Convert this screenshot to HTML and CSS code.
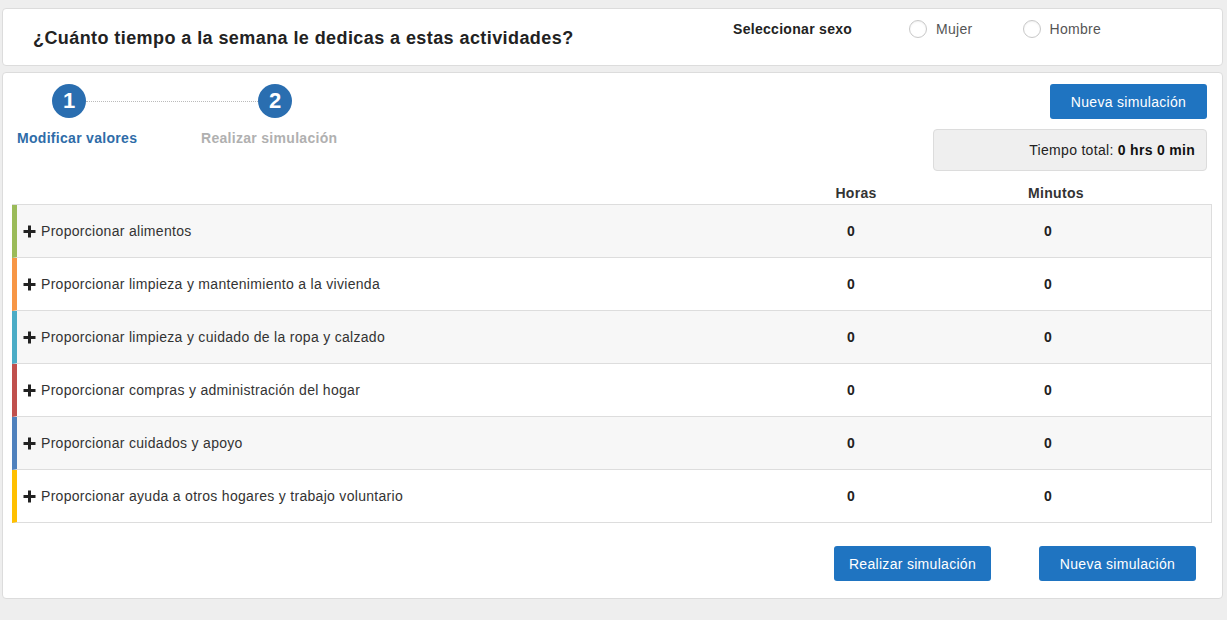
FILE: index.html
```html
<!DOCTYPE html>
<html lang="es">
<head>
<meta charset="utf-8">
<title>Simulador</title>
<link rel="stylesheet" href="styles.css">
</head>
<body>
<div class="page">
  <div class="card head-card">
    <h1 class="title">¿Cuánto tiempo a la semana le dedicas a estas actividades?</h1>
    <div class="sex">
      <span class="sex-label">Seleccionar sexo</span>
      <label class="radio"><span class="radio-circle"></span><span>Mujer</span></label>
      <label class="radio radio-2"><span class="radio-circle"></span><span>Hombre</span></label>
    </div>
  </div>

  <div class="card main-card">
    <div class="top">
      <div class="stepper">
        <div class="steps-row">
          <span class="step-circle">1</span>
          <span class="step-line"></span>
          <span class="step-circle">2</span>
        </div>
        <div class="labels-row">
          <span class="step-label active">Modificar valores</span>
          <span class="step-label">Realizar simulación</span>
        </div>
      </div>
      <div class="right-col">
        <button class="btn">Nueva simulación</button>
        <div class="total">Tiempo total: <b>0 hrs 0 min</b></div>
      </div>
    </div>

    <div class="col-head">
      <span></span>
      <span>Horas</span>
      <span>Minutos</span>
    </div>

    <div class="table">
      <div class="row odd c1">
        <span class="label"><svg class="plus" viewBox="0 0 13 13"><path d="M6.5 0.5v12M0.5 6.5h12"/></svg>Proporcionar alimentos</span>
        <span class="val">0</span><span class="val">0</span>
      </div>
      <div class="row c2">
        <span class="label"><svg class="plus" viewBox="0 0 13 13"><path d="M6.5 0.5v12M0.5 6.5h12"/></svg>Proporcionar limpieza y mantenimiento a la vivienda</span>
        <span class="val">0</span><span class="val">0</span>
      </div>
      <div class="row odd c3">
        <span class="label"><svg class="plus" viewBox="0 0 13 13"><path d="M6.5 0.5v12M0.5 6.5h12"/></svg>Proporcionar limpieza y cuidado de la ropa y calzado</span>
        <span class="val">0</span><span class="val">0</span>
      </div>
      <div class="row c4">
        <span class="label"><svg class="plus" viewBox="0 0 13 13"><path d="M6.5 0.5v12M0.5 6.5h12"/></svg>Proporcionar compras y administración del hogar</span>
        <span class="val">0</span><span class="val">0</span>
      </div>
      <div class="row odd c5">
        <span class="label"><svg class="plus" viewBox="0 0 13 13"><path d="M6.5 0.5v12M0.5 6.5h12"/></svg>Proporcionar cuidados y apoyo</span>
        <span class="val">0</span><span class="val">0</span>
      </div>
      <div class="row c6">
        <span class="label"><svg class="plus" viewBox="0 0 13 13"><path d="M6.5 0.5v12M0.5 6.5h12"/></svg>Proporcionar ayuda a otros hogares y trabajo voluntario</span>
        <span class="val">0</span><span class="val">0</span>
      </div>
    </div>

    <div class="actions">
      <button class="btn">Realizar simulación</button>
      <button class="btn">Nueva simulación</button>
    </div>
  </div>
</div>
</body>
</html>
```
FILE: styles.css
```css
* { box-sizing: border-box; }
html, body { margin: 0; padding: 0; }
body {
  background: #eeeeee;
  font-family: "Liberation Sans", Arial, sans-serif;
  color: #333;
  font-size: 14px;
  letter-spacing: 0.3px;
  width: 1227px;
  height: 620px;
  overflow: hidden;
}
.page { padding: 8px 4px 0 2px; }
.card {
  background: #fff;
  border: 1px solid #dcdcdc;
  border-radius: 4px;
}
.head-card {
  height: 58px;
  display: flex;
  align-items: flex-start;
}
.title {
  margin: 0;
  flex: 0 0 730px;
  padding: 19px 0 0 30px;
  font-size: 18px;
  letter-spacing: 0.42px;
  line-height: 20px;
  font-weight: bold;
  color: #222;
}
.sex {
  display: flex;
  align-items: center;
  padding-top: 10px;
  line-height: 20px;
}
.sex-label { font-weight: bold; color: #222; width: 176px; }
.radio { display: flex; align-items: center; color: #555; }
.radio-circle {
  width: 18px; height: 18px;
  border: 1px solid #c8c8c8;
  border-radius: 50%;
  background: #fff;
  margin-right: 9px;
  box-shadow: inset 0 1px 2px rgba(0,0,0,0.06);
}
.radio-2 { margin-left: 50px; }

.main-card {
  margin-top: 6px;
  height: 527px;
  padding: 11px 0 0 0;
}
.top {
  display: flex;
  justify-content: space-between;
  align-items: flex-start;
}
.steps-row {
  display: flex;
  align-items: center;
  padding-left: 49px;
}
.step-circle {
  width: 34px; height: 34px;
  border-radius: 50%;
  background: #2a6eb0;
  color: #fff;
  font-weight: bold;
  font-size: 22px;
  letter-spacing: 0;
  line-height: 34px;
  text-align: center;
}
.step-line {
  width: 172px;
  border-top: 1px dotted #bbb;
  height: 0;
}
.labels-row {
  display: flex;
  padding-left: 14px;
  margin-top: 12px;
  line-height: 16px;
}
.step-label { font-weight: bold; color: #b0b0b0; }
.step-label.active { color: #2e6ca8; width: 184px; }

.right-col {
  display: flex;
  flex-direction: column;
  align-items: flex-end;
  padding-right: 15px;
}
.btn {
  width: 157px;
  height: 35px;
  border: 0;
  border-radius: 3px;
  background: #1f74c1;
  color: #fff;
  font-family: "Liberation Sans", Arial, sans-serif;
  font-size: 14px;
  letter-spacing: 0.3px;
  padding: 0;
}
.total {
  margin-top: 10px;
  width: 274px;
  height: 42px;
  background: #efefef;
  border: 1px solid #dcdcdc;
  border-radius: 4px;
  text-align: right;
  padding: 0 11px;
  line-height: 40px;
  color: #222;
}
.total b { color: #111; }

.col-head {
  display: grid;
  grid-template-columns: 1fr 200px 200px;
  margin: 11px 66px 0 9px;
  height: 22px;
  line-height: 22px;
  font-weight: bold;
  color: #333;
  text-align: center;
}
.table {
  margin: 0 10px 0 9px;
  border-top: 1px solid #ddd;
  border-right: 1px solid #ddd;
}
.row {
  display: grid;
  grid-template-columns: 1fr 200px 194px;
  padding-right: 66px;
  height: 53px;
  align-items: center;
  border-bottom: 1px solid #ddd;
  border-left: 5px solid #ccc;
  background: #fff;
}
.row.odd { background: #f7f7f7; }
.c1 { border-left-color: #9bbb59; }
.c2 { border-left-color: #f79646; }
.c3 { border-left-color: #4bacc6; }
.c4 { border-left-color: #c0504d; }
.c5 { border-left-color: #4f81bd; }
.c6 { border-left-color: #ffc000; }
.label {
  display: flex;
  align-items: center;
  padding-left: 6px;
  color: #333;
}
.plus {
  width: 13px; height: 13px;
  margin-right: 5px;
  stroke: #222;
  stroke-width: 3;
  fill: none;
}
.val { text-align: center; font-weight: bold; color: #222; }

.actions {
  display: flex;
  justify-content: flex-end;
  gap: 48px;
  padding-right: 26px;
  margin-top: 23px;
}
```
